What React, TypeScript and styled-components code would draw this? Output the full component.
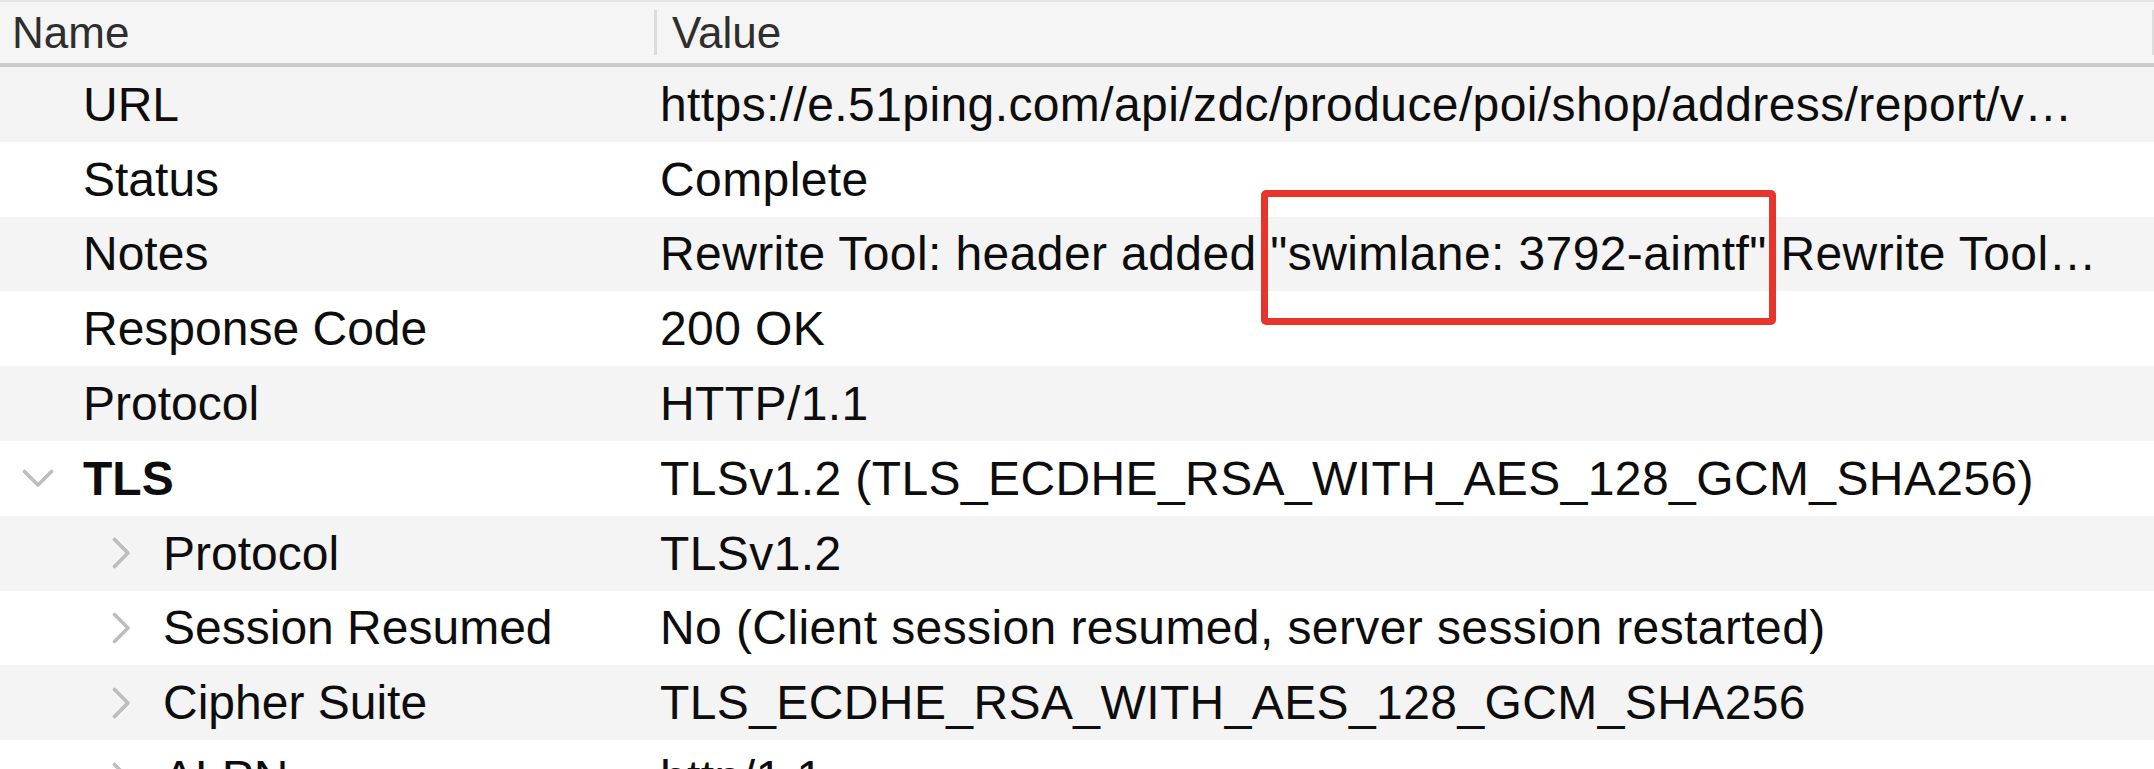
import React from "react";
import styled, { createGlobalStyle } from "styled-components";

type Entry = {
  name: string;
  value: string;
  level: 0 | 1;
  toggle?: "open" | "closed";
  bold?: boolean;
  marked?: string;
  tail?: string;
};

const entries: Entry[] = [
  { name: "URL", value: "https://e.51ping.com/api/zdc/produce/poi/shop/address/report/v…", level: 0 },
  { name: "Status", value: "Complete", level: 0 },
  {
    name: "Notes",
    value: "Rewrite Tool: header added ",
    marked: "\"swimlane: 3792-aimtf\"",
    tail: " Rewrite Tool…",
    level: 0,
  },
  { name: "Response Code", value: "200 OK", level: 0 },
  { name: "Protocol", value: "HTTP/1.1", level: 0 },
  { name: "TLS", value: "TLSv1.2 (TLS_ECDHE_RSA_WITH_AES_128_GCM_SHA256)", level: 0, toggle: "open", bold: true },
  { name: "Protocol", value: "TLSv1.2", level: 1, toggle: "closed" },
  { name: "Session Resumed", value: "No (Client session resumed, server session restarted)", level: 1, toggle: "closed" },
  { name: "Cipher Suite", value: "TLS_ECDHE_RSA_WITH_AES_128_GCM_SHA256", level: 1, toggle: "closed" },
  { name: "ALPN", value: "http/1.1", level: 1, toggle: "closed" },
];

const Chevron = ({ open }: { open: boolean }) =>
  open ? (
    <svg width="32" height="19" viewBox="0 0 32 19">
      <polyline points="2.5,2.5 16,16 29.5,2.5" fill="none" stroke="#bdbdbd" strokeWidth="3.6" strokeLinecap="round" strokeLinejoin="round" />
    </svg>
  ) : (
    <svg width="19" height="32" viewBox="0 0 19 32">
      <polyline points="2.5,2.5 16,16 2.5,29.5" fill="none" stroke="#bdbdbd" strokeWidth="3.6" strokeLinecap="round" strokeLinejoin="round" />
    </svg>
  );

const App = () => {
  return (
    <>
      <GlobalStyle />
      <Table>
        <HeaderBar>
          <HeaderCell>Name</HeaderCell>
          <HeaderCell>
            <Divider />
            Value
            <EdgeDivider />
          </HeaderCell>
        </HeaderBar>
        {entries.map((entry, i) => (
          <Row key={i} $striped={i % 2 === 0}>
            <NameCell $level={entry.level}>
              <ToggleSlot $level={entry.level}>
                {entry.toggle && <Chevron open={entry.toggle === "open"} />}
              </ToggleSlot>
              <NameText $bold={entry.bold}>{entry.name}</NameText>
            </NameCell>
            <ValueCell>
              {entry.value}
              {entry.marked && <Highlight>{entry.marked}</Highlight>}
              {entry.tail}
            </ValueCell>
          </Row>
        ))}
      </Table>
    </>
  );
};

export default App;

const GlobalStyle = createGlobalStyle`
  html, body {
    margin: 0;
    padding: 0;
    background: #ffffff;
    overflow: hidden;
  }
  body {
    font-family: "Liberation Sans", Arial, sans-serif;
    -webkit-font-smoothing: antialiased;
  }
`;

const Table = styled.div`
  width: 2154px;
  height: 769px;
  overflow: hidden;
  background: #ffffff;
`;

const HeaderBar = styled.div`
  display: grid;
  grid-template-columns: 654px 1fr;
  height: 61px;
  border-top: 2px solid #e4e4e4;
  border-bottom: 4px solid #cbcbcb;
  background: #f5f5f5;
`;

const HeaderCell = styled.div`
  display: flex;
  align-items: center;
  padding-left: 12px;
  font-size: 44px;
  color: #2e2e2e;
  white-space: nowrap;

  & + & {
    padding-left: 0;
  }
`;

const Divider = styled.span`
  width: 3px;
  height: 45px;
  margin-right: 15px;
  background: #dcdcdc;
`;

const EdgeDivider = styled(Divider)`
  width: 2px;
  margin: 0 0 0 auto;
`;

const Row = styled.div<{ $striped: boolean }>`
  display: grid;
  grid-template-columns: 660px 1fr;
  align-items: center;
  height: 74.8px;
  background: ${(p) => (p.$striped ? "#f4f4f4" : "#ffffff")};
`;

const NameCell = styled.div<{ $level: 0 | 1 }>`
  display: flex;
  align-items: center;
  padding-left: ${(p) => (p.$level === 0 ? 22 : 112)}px;
`;

const ToggleSlot = styled.span<{ $level: 0 | 1 }>`
  display: flex;
  align-items: center;
  width: ${(p) => (p.$level === 0 ? 61 : 51)}px;
  flex: none;
`;

const NameText = styled.span<{ $bold?: boolean }>`
  font-size: 48px;
  font-weight: ${(p) => (p.$bold ? 700 : 400)};
  color: #0d0d0d;
  white-space: nowrap;
`;

const ValueCell = styled.div`
  font-size: 48px;
  letter-spacing: 0.4px;
  color: #0d0d0d;
  white-space: nowrap;
`;

const Highlight = styled.span`
  position: relative;

  &::after {
    content: "";
    position: absolute;
    z-index: 1;
    left: -9px;
    right: -9px;
    top: -37px;
    bottom: -45px;
    border: 7px solid #e8352b;
    border-radius: 5px;
  }
`;
